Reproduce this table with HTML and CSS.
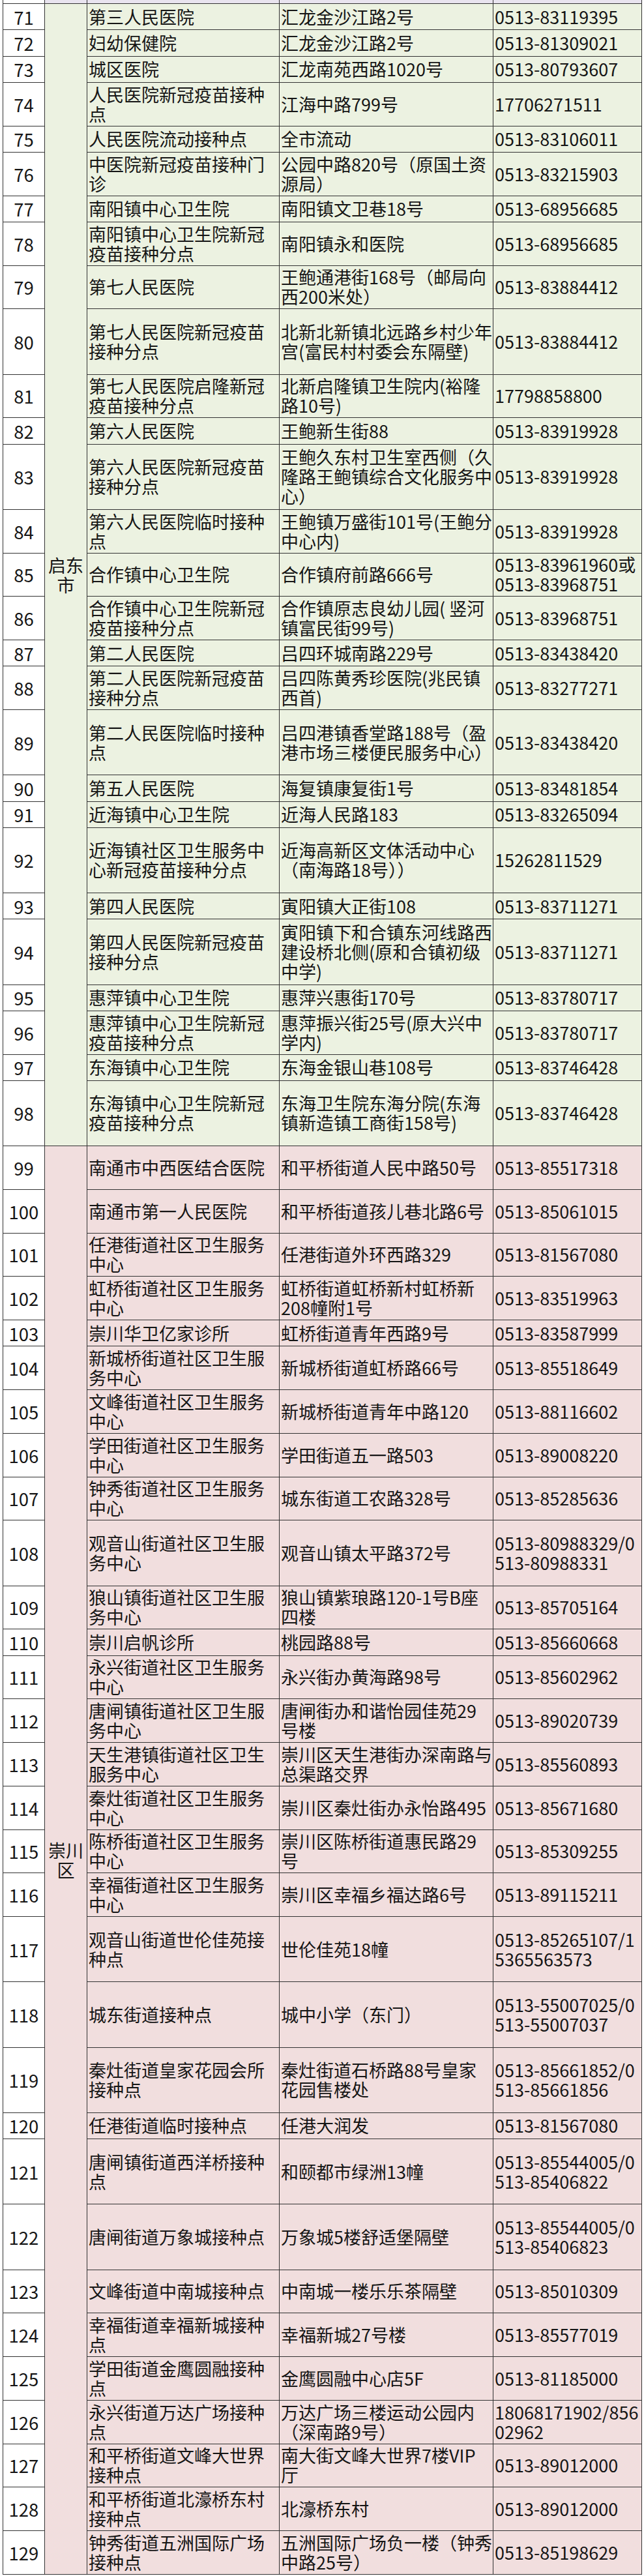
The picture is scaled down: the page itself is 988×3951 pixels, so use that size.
FILE: index.html
```html
<!DOCTYPE html>
<html lang="zh-CN">
<head>
<meta charset="utf-8">
<title>新冠疫苗接种点</title>
<link rel="stylesheet" href="styles.css">
</head>
<body>
<div class="sheet cut">
  <div class="num"></div><div></div><div></div><div></div><div></div>
</div>
<div class="sheet qd">
  <div class="num r1">71</div><div class="dist span28">启东<br>市</div><div class="c">第三人民医院</div><div class="c">汇龙金沙江路2号</div><div class="c">0513-83119395</div>
  <div class="num r1">72</div><div class="c">妇幼保健院</div><div class="c">汇龙金沙江路2号</div><div class="c">0513-81309021</div>
  <div class="num r1">73</div><div class="c">城区医院</div><div class="c">汇龙南苑西路1020号</div><div class="c">0513-80793607</div>
  <div class="num r2">74</div><div class="c">人民医院新冠疫苗接种<br>点</div><div class="c">江海中路799号</div><div class="c">17706271511</div>
  <div class="num r1">75</div><div class="c">人民医院流动接种点</div><div class="c">全市流动</div><div class="c">0513-83106011</div>
  <div class="num r2">76</div><div class="c">中医院新冠疫苗接种门<br>诊</div><div class="c">公园中路820号（原国土资<br>源局）</div><div class="c">0513-83215903</div>
  <div class="num r1">77</div><div class="c">南阳镇中心卫生院</div><div class="c">南阳镇文卫巷18号</div><div class="c">0513-68956685</div>
  <div class="num r2">78</div><div class="c">南阳镇中心卫生院新冠<br>疫苗接种分点</div><div class="c">南阳镇永和医院</div><div class="c">0513-68956685</div>
  <div class="num r2">79</div><div class="c">第七人民医院</div><div class="c">王鲍通港街168号（邮局向<br>西200米处）</div><div class="c">0513-83884412</div>
  <div class="num r3">80</div><div class="c">第七人民医院新冠疫苗<br>接种分点</div><div class="c">北新北新镇北远路乡村少年<br>宫(富民村村委会东隔壁)</div><div class="c">0513-83884412</div>
  <div class="num r2">81</div><div class="c">第七人民医院启隆新冠<br>疫苗接种分点</div><div class="c">北新启隆镇卫生院内(裕隆<br>路10号)</div><div class="c">17798858800</div>
  <div class="num r1">82</div><div class="c">第六人民医院</div><div class="c">王鲍新生街88</div><div class="c">0513-83919928</div>
  <div class="num r3">83</div><div class="c">第六人民医院新冠疫苗<br>接种分点</div><div class="c">王鲍久东村卫生室西侧（久<br>隆路王鲍镇综合文化服务中<br>心）</div><div class="c">0513-83919928</div>
  <div class="num r2">84</div><div class="c">第六人民医院临时接种<br>点</div><div class="c">王鲍镇万盛街101号(王鲍分<br>中心内)</div><div class="c">0513-83919928</div>
  <div class="num r2">85</div><div class="c">合作镇中心卫生院</div><div class="c">合作镇府前路666号</div><div class="c">0513-83961960或<br>0513-83968751</div>
  <div class="num r2">86</div><div class="c">合作镇中心卫生院新冠<br>疫苗接种分点</div><div class="c">合作镇原志良幼儿园( 竖河<br>镇富民街99号)</div><div class="c">0513-83968751</div>
  <div class="num r1">87</div><div class="c">第二人民医院</div><div class="c">吕四环城南路229号</div><div class="c">0513-83438420</div>
  <div class="num r2">88</div><div class="c">第二人民医院新冠疫苗<br>接种分点</div><div class="c">吕四陈黄秀珍医院(兆民镇<br>西首)</div><div class="c">0513-83277271</div>
  <div class="num r3">89</div><div class="c">第二人民医院临时接种<br>点</div><div class="c">吕四港镇香堂路188号（盈<br>港市场三楼便民服务中心）</div><div class="c">0513-83438420</div>
  <div class="num r1">90</div><div class="c">第五人民医院</div><div class="c">海复镇康复街1号</div><div class="c">0513-83481854</div>
  <div class="num r1">91</div><div class="c">近海镇中心卫生院</div><div class="c">近海人民路183</div><div class="c">0513-83265094</div>
  <div class="num r3">92</div><div class="c">近海镇社区卫生服务中<br>心新冠疫苗接种分点</div><div class="c">近海高新区文体活动中心<br>（南海路18号））</div><div class="c">15262811529</div>
  <div class="num r1">93</div><div class="c">第四人民医院</div><div class="c">寅阳镇大正街108</div><div class="c">0513-83711271</div>
  <div class="num r3">94</div><div class="c">第四人民医院新冠疫苗<br>接种分点</div><div class="c">寅阳镇下和合镇东河线路西<br>建设桥北侧(原和合镇初级<br>中学)</div><div class="c">0513-83711271</div>
  <div class="num r1">95</div><div class="c">惠萍镇中心卫生院</div><div class="c">惠萍兴惠街170号</div><div class="c">0513-83780717</div>
  <div class="num r2">96</div><div class="c">惠萍镇中心卫生院新冠<br>疫苗接种分点</div><div class="c">惠萍振兴街25号(原大兴中<br>学内)</div><div class="c">0513-83780717</div>
  <div class="num r1">97</div><div class="c">东海镇中心卫生院</div><div class="c">东海金银山巷108号</div><div class="c">0513-83746428</div>
  <div class="num r3">98</div><div class="c">东海镇中心卫生院新冠<br>疫苗接种分点</div><div class="c">东海卫生院东海分院(东海<br>镇新造镇工商街158号)</div><div class="c">0513-83746428</div>
</div>
<div class="sheet cc">
  <div class="num r2">99</div><div class="dist span31">崇川<br>区</div><div class="c">南通市中西医结合医院</div><div class="c">和平桥街道人民中路50号</div><div class="c">0513-85517318</div>
  <div class="num r2">100</div><div class="c">南通市第一人民医院</div><div class="c">和平桥街道孩儿巷北路6号</div><div class="c">0513-85061015</div>
  <div class="num r2">101</div><div class="c">任港街道社区卫生服务<br>中心</div><div class="c">任港街道外环西路329</div><div class="c">0513-81567080</div>
  <div class="num r2">102</div><div class="c">虹桥街道社区卫生服务<br>中心</div><div class="c">虹桥街道虹桥新村虹桥新<br>208幢附1号</div><div class="c">0513-83519963</div>
  <div class="num r1">103</div><div class="c">崇川华卫亿家诊所</div><div class="c">虹桥街道青年西路9号</div><div class="c">0513-83587999</div>
  <div class="num r2">104</div><div class="c">新城桥街道社区卫生服<br>务中心</div><div class="c">新城桥街道虹桥路66号</div><div class="c">0513-85518649</div>
  <div class="num r2">105</div><div class="c">文峰街道社区卫生服务<br>中心</div><div class="c">新城桥街道青年中路120</div><div class="c">0513-88116602</div>
  <div class="num r2">106</div><div class="c">学田街道社区卫生服务<br>中心</div><div class="c">学田街道五一路503</div><div class="c">0513-89008220</div>
  <div class="num r2">107</div><div class="c">钟秀街道社区卫生服务<br>中心</div><div class="c">城东街道工农路328号</div><div class="c">0513-85285636</div>
  <div class="num r3">108</div><div class="c">观音山街道社区卫生服<br>务中心</div><div class="c">观音山镇太平路372号</div><div class="c">0513-80988329/0<br>513-80988331</div>
  <div class="num r2">109</div><div class="c">狼山镇街道社区卫生服<br>务中心</div><div class="c">狼山镇紫琅路120-1号B座<br>四楼</div><div class="c">0513-85705164</div>
  <div class="num r1">110</div><div class="c">崇川启帆诊所</div><div class="c">桃园路88号</div><div class="c">0513-85660668</div>
  <div class="num r2">111</div><div class="c">永兴街道社区卫生服务<br>中心</div><div class="c">永兴街办黄海路98号</div><div class="c">0513-85602962</div>
  <div class="num r2">112</div><div class="c">唐闸镇街道社区卫生服<br>务中心</div><div class="c">唐闸街办和谐怡园佳苑29<br>号楼</div><div class="c">0513-89020739</div>
  <div class="num r2">113</div><div class="c">天生港镇街道社区卫生<br>服务中心</div><div class="c">崇川区天生港街办深南路与<br>总渠路交界</div><div class="c">0513-85560893</div>
  <div class="num r2">114</div><div class="c">秦灶街道社区卫生服务<br>中心</div><div class="c">崇川区秦灶街办永怡路495</div><div class="c">0513-85671680</div>
  <div class="num r2">115</div><div class="c">陈桥街道社区卫生服务<br>中心</div><div class="c">崇川区陈桥街道惠民路29<br>号</div><div class="c">0513-85309255</div>
  <div class="num r2">116</div><div class="c">幸福街道社区卫生服务<br>中心</div><div class="c">崇川区幸福乡福达路6号</div><div class="c">0513-89115211</div>
  <div class="num r3">117</div><div class="c">观音山街道世伦佳苑接<br>种点</div><div class="c">世伦佳苑18幢</div><div class="c">0513-85265107/1<br>5365563573</div>
  <div class="num r3">118</div><div class="c">城东街道接种点</div><div class="c">城中小学（东门）</div><div class="c">0513-55007025/0<br>513-55007037</div>
  <div class="num r3">119</div><div class="c">秦灶街道皇家花园会所<br>接种点</div><div class="c">秦灶街道石桥路88号皇家<br>花园售楼处</div><div class="c">0513-85661852/0<br>513-85661856</div>
  <div class="num r1">120</div><div class="c">任港街道临时接种点</div><div class="c">任港大润发</div><div class="c">0513-81567080</div>
  <div class="num r3">121</div><div class="c">唐闸镇街道西洋桥接种<br>点</div><div class="c">和颐都市绿洲13幢</div><div class="c">0513-85544005/0<br>513-85406822</div>
  <div class="num r3">122</div><div class="c">唐闸街道万象城接种点</div><div class="c">万象城5楼舒适堡隔壁</div><div class="c">0513-85544005/0<br>513-85406823</div>
  <div class="num r2">123</div><div class="c">文峰街道中南城接种点</div><div class="c">中南城一楼乐乐茶隔壁</div><div class="c">0513-85010309</div>
  <div class="num r2">124</div><div class="c">幸福街道幸福新城接种<br>点</div><div class="c">幸福新城27号楼</div><div class="c">0513-85577019</div>
  <div class="num r2">125</div><div class="c">学田街道金鹰圆融接种<br>点</div><div class="c">金鹰圆融中心店5F</div><div class="c">0513-81185000</div>
  <div class="num r2">126</div><div class="c">永兴街道万达广场接种<br>点</div><div class="c">万达广场三楼运动公园内<br>（深南路9号）</div><div class="c">18068171902/856<br>02962</div>
  <div class="num r2">127</div><div class="c">和平桥街道文峰大世界<br>接种点</div><div class="c">南大街文峰大世界7楼VIP<br>厅</div><div class="c">0513-89012000</div>
  <div class="num r2">128</div><div class="c">和平桥街道北濠桥东村<br>接种点</div><div class="c">北濠桥东村</div><div class="c">0513-89012000</div>
  <div class="num r2">129</div><div class="c">钟秀街道五洲国际广场<br>接种点</div><div class="c">五洲国际广场负一楼（钟秀<br>中路25号）</div><div class="c">0513-85198629</div>
</div>
</body>
</html>
```

FILE: styles.css
```css
html, body {
  margin: 0;
  padding: 0;
  background: #ffffff;
}

body {
  font-family: "Noto Sans CJK SC", "Noto Sans", "Liberation Sans", sans-serif;
  color: #151515;
}

.sheet {
  display: grid;
  grid-template-columns: 64px 65px 295px 328px 228px;
  margin-left: 4px;
  width: 980px;
  border-left: 1px solid #333333;
  font-size: 27px;
  line-height: 30px;
}

.sheet > div {
  box-sizing: border-box;
  display: flex;
  align-items: center;
  white-space: nowrap;
  border-right: 1px solid #333333;
  border-bottom: 1px solid #333333;
}

.cut > div {
  height: 6px;
  background: #e9e4ef;
}

.sheet > .num {
  justify-content: center;
  background: #ffffff;
  font-size: 27.5px;
}

.c {
  padding-left: 2px;
}

.dist {
  justify-content: center;
  text-align: center;
}

.span28 {
  grid-row: span 28;
}

.span31 {
  grid-row: span 31;
}

.r1 {
  height: 40.25px;
}

.r2 {
  height: 66.75px;
}

.r3 {
  height: 100.25px;
}

.qd > div {
  background: #ecf2e1;
}

.cc > div {
  background: #f1dede;
}
```
